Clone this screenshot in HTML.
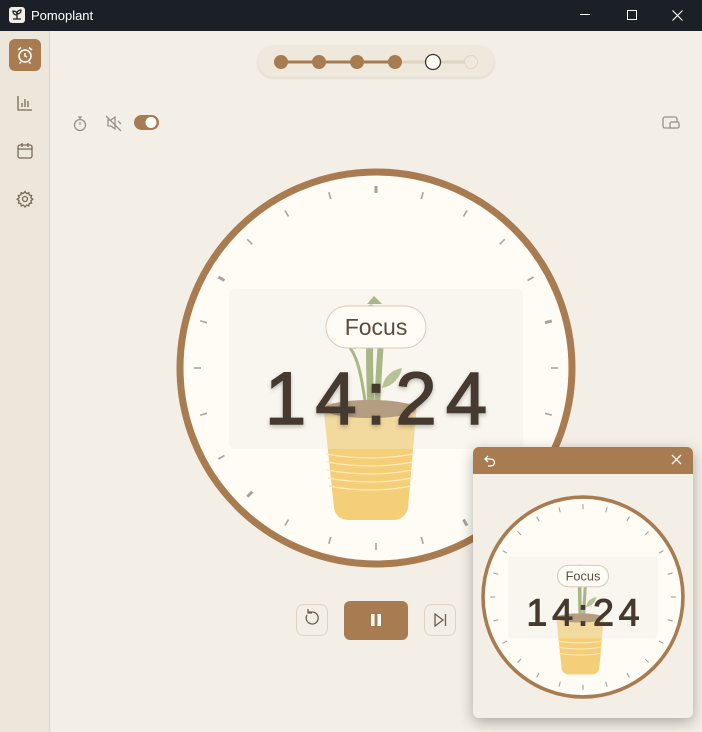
<!DOCTYPE html>
<html><head><meta charset="utf-8"><style>
*{margin:0;padding:0;box-sizing:border-box}
body{width:702px;height:732px;overflow:hidden;background:#f3efe6;font-family:"Liberation Sans",sans-serif;position:relative}
.title{position:absolute;left:0;top:0;width:702px;height:31px;background:#1b2026;color:#fff;font-size:13px}
.side{position:absolute;left:0;top:31px;width:50px;height:701px;background:#ede6da;border-right:1px solid #ddd3c3}
.abs{position:absolute}
</style></head><body>
<div class="title">
  <div class="abs" style="left:9px;top:7px;width:16px;height:16px;background:#f3efe6;border-radius:3px"></div>
  <svg class="abs" style="left:9px;top:7px" width="16" height="16" viewBox="0 0 16 16"><path d="M4 12h8M8 12V6M8 8C6 8 4 7 4 4c3 0 4 1 4 3M8 7c0-3 2-4 4-4 0 2-1 4-4 4" stroke="#1b2026" stroke-width="1.3" fill="none"/></svg>
  <div class="abs" style="left:31px;top:8px">Pomoplant</div>
  <div class="abs" style="left:580px;top:14px;width:10px;height:1px;background:#fff"></div>
  <div class="abs" style="left:627px;top:10px;width:10px;height:10px;border:1px solid #fff"></div>
  <svg class="abs" style="left:672px;top:10px" width="11" height="11"><path d="M0.5 0.5l10 10M10.5 0.5l-10 10" stroke="#fff" stroke-width="1.1"/></svg>
</div>
<div class="side">
  <div class="abs" style="left:9px;top:8px;width:32px;height:32px;background:#a87b50;border-radius:6px"></div>
  <svg class="abs" style="left:15px;top:14px" width="20" height="20" viewBox="0 0 20 20" fill="none" stroke="#fff" stroke-width="1.5"><circle cx="10" cy="11" r="6"/><path d="M10 8v3l2 1M3 5l3-2.5M17 5l-3-2.5M6 17l-1.5 1.5M14 17l1.5 1.5"/></svg>
  <svg class="abs" style="left:15px;top:62px" width="20" height="20" viewBox="0 0 20 20" fill="none" stroke="#7a6a58" stroke-width="1.3"><path d="M3 3v14h14M7 14v-4M10 14V6M13 14v-6"/></svg>
  <svg class="abs" style="left:15px;top:110px" width="20" height="20" viewBox="0 0 20 20" fill="none" stroke="#7a6a58" stroke-width="1.3"><rect x="3" y="4" width="14" height="13" rx="2"/><path d="M3 8h14M7 2v4M13 2v4"/></svg>
  <svg class="abs" style="left:15px;top:158px" width="20" height="20" viewBox="0 0 20 20" fill="none" stroke="#7a6a58" stroke-width="1.3"><circle cx="10" cy="10" r="2.5"/><path d="M10 2.5l1.5 2 2.3-.8.4 2.4 2.4.4-.8 2.3 2 1.5-2 1.5.8 2.3-2.4.4-.4 2.4-2.3-.8-1.5 2-1.5-2-2.3.8-.4-2.4-2.4-.4.8-2.3-2-1.5 2-1.5-.8-2.3 2.4-.4.4-2.4 2.3.8z"/></svg>
</div>

<div class="abs" style="left:258px;top:46px;width:236px;height:31px;border-radius:16px;background:#efe9dd;box-shadow:0 1px 3px rgba(0,0,0,.12)"></div>
<svg class="abs" style="left:0;top:0" width="702" height="732">
  <line x1="281" y1="62" x2="395" y2="62" stroke="#a87b50" stroke-width="3"/>
  <line x1="395" y1="62" x2="471" y2="62" stroke="#e0d4c0" stroke-width="3"/>
  <circle cx="281" cy="62" r="7" fill="#a87b50"/><circle cx="319" cy="62" r="7" fill="#a87b50"/>
  <circle cx="357" cy="62" r="7" fill="#a87b50"/><circle cx="395" cy="62" r="7" fill="#a87b50"/>
  <circle cx="433" cy="62" r="7.5" fill="#fefcf5" stroke="#3e3530" stroke-width="1.3"/>
  <circle cx="471" cy="62" r="6.5" fill="#efe8dc" stroke="#e0d6c6"/>
  <g fill="none" stroke="#9a9088" stroke-width="1.3">
    <circle cx="80" cy="125" r="5.5"/><path d="M78 117h4M80 120v-3M80 122v3"/>
    <path d="M108 120h3l4-3v12l-4-3h-3zM106 116l15 15M118 121l3 3"/>
    <rect x="663" y="117" width="14" height="11" rx="2"/><rect x="670" y="122" width="9" height="6" rx="1.5" fill="#f3efe6"/>
  </g>
  <rect x="134" y="115" width="25" height="15" rx="7.5" fill="#a87b50"/>
  <circle cx="151" cy="122.5" r="5.5" fill="#fff"/>

  <g transform="translate(376,368)">
    <circle r="196" fill="#fefcf5" stroke="#a87b50" stroke-width="7"/>
    <g stroke="#a8a39c" stroke-width="1.6">
      <line x1="0" y1="-182" x2="0" y2="-175" stroke-width="3"/>
      <line x1="0" y1="-182" x2="0" y2="-175" transform="rotate(15)"/>
      <line x1="0" y1="-182" x2="0" y2="-175" transform="rotate(30)"/>
      <line x1="0" y1="-182" x2="0" y2="-175" transform="rotate(45)"/>
      <line x1="0" y1="-182" x2="0" y2="-175" transform="rotate(60)"/>
      <line x1="0" y1="-182" x2="0" y2="-175" transform="rotate(75)" stroke-width="3"/>
      <line x1="0" y1="-182" x2="0" y2="-175" transform="rotate(90)"/>
      <line x1="0" y1="-182" x2="0" y2="-175" transform="rotate(105)"/>
      <line x1="0" y1="-182" x2="0" y2="-175" transform="rotate(120)"/>
      <line x1="0" y1="-182" x2="0" y2="-175" transform="rotate(135)"/>
      <line x1="0" y1="-182" x2="0" y2="-175" transform="rotate(150)" stroke-width="3"/>
      <line x1="0" y1="-182" x2="0" y2="-175" transform="rotate(165)"/>
      <line x1="0" y1="-182" x2="0" y2="-175" transform="rotate(180)"/>
      <line x1="0" y1="-182" x2="0" y2="-175" transform="rotate(195)"/>
      <line x1="0" y1="-182" x2="0" y2="-175" transform="rotate(210)"/>
      <line x1="0" y1="-182" x2="0" y2="-175" transform="rotate(225)" stroke-width="3"/>
      <line x1="0" y1="-182" x2="0" y2="-175" transform="rotate(240)"/>
      <line x1="0" y1="-182" x2="0" y2="-175" transform="rotate(255)"/>
      <line x1="0" y1="-182" x2="0" y2="-175" transform="rotate(270)"/>
      <line x1="0" y1="-182" x2="0" y2="-175" transform="rotate(285)"/>
      <line x1="0" y1="-182" x2="0" y2="-175" transform="rotate(300)" stroke-width="3"/>
      <line x1="0" y1="-182" x2="0" y2="-175" transform="rotate(315)"/>
      <line x1="0" y1="-182" x2="0" y2="-175" transform="rotate(330)"/>
      <line x1="0" y1="-182" x2="0" y2="-175" transform="rotate(345)"/>
    </g>
    <g fill="none" stroke="#849a55" stroke-width="7" stroke-linecap="round">
      <path d="M-5 40 C-7 0 -7 -30 -5 -60"/>
      <path d="M1 40 C3 0 5 -30 7 -55" stroke-width="6"/>
    </g>
    <path d="M-32 -20 c-8 -5 -10 -10 -2 -10 c10 0 14 6 14 11 z" fill="#9bae6c"/>
    <path d="M-26 -20 C-18 -10 -14 10 -10 40" stroke="#849a55" stroke-width="3" fill="none"/>
    <path d="M6 20 c2 -12 10 -18 20 -20 c-2 10 -9 18 -20 20z" fill="#9bae6c"/>
    <path d="M-9 -64 l7 -8 l8 8z" fill="#849a55"/>
    <path d="M-53 35 L41 35 L32 140 Q29 152 16 152 L-26 152 Q-40 152 -42 140 Z" fill="#f5cf78"/>
    <ellipse cx="-6" cy="41" rx="46" ry="9" fill="#96734c"/>
    <g stroke="#fbe9c0" stroke-width="1.2" fill="none">
      <path d="M-50 86 Q-6 94 38 86"/><path d="M-49 94 Q-6 102 37 94"/><path d="M-49 102 Q-6 110 37 102"/>
      <path d="M-48 110 Q-6 118 36 110"/><path d="M-47 118 Q-6 126 35 118"/>
    </g>
    <rect x="-147" y="-79" width="294" height="160" rx="6" fill="#efebe1" fill-opacity="0.35"/>
    <text x="0" y="56" text-anchor="middle" font-family="Liberation Sans" font-size="74" fill="#463a30" stroke="#463a30" stroke-width="1.6" textLength="222" lengthAdjust="spacing" style="filter:drop-shadow(0 2px 2px rgba(0,0,0,.25))">14:24</text>
    <rect x="-50" y="-62" width="100" height="42" rx="21" fill="#fefcf5" stroke="#d8ccb8"/>
    <text x="0" y="-33" text-anchor="middle" font-family="Liberation Sans" font-size="23" fill="#5a4c40">Focus</text>
  </g>

  <rect x="296.5" y="604.5" width="31" height="31" rx="7" fill="#f3efe6" stroke="#e0d3c0"/>
  <path d="M307 615 a6 6 0 1 0 5 -3 h-4 M308 609 v4 h4" fill="none" stroke="#6b5d50" stroke-width="1.3"/>
  <rect x="344" y="601" width="64" height="39" rx="6" fill="#a87b50"/>
  <rect x="371" y="614" width="3.5" height="12" fill="#fff"/><rect x="377.5" y="614" width="3.5" height="12" fill="#fff"/>
  <rect x="424.5" y="604.5" width="31" height="31" rx="7" fill="#f3efe6" stroke="#e0d3c0"/>
  <path d="M435 614v12l8-6z M445.5 614v12" fill="none" stroke="#6b5d50" stroke-width="1.3"/>
</svg>

<div class="abs" style="left:473px;top:447px;width:220px;height:271px;border-radius:6px;background:#f3efe6;box-shadow:0 4px 14px rgba(0,0,0,.3);overflow:hidden">
  <div style="height:27px;background:#a87b50"></div>
</div>
<svg class="abs" style="left:0;top:0" width="702" height="732">
  <path d="M488 456 l-3 3 l3 3 M485 459 h6 a3.5 3.5 0 0 1 0 7 h-3" fill="none" stroke="#fff" stroke-width="1.3"/>
  <path d="M672 455l9 9M681 455l-9 9" stroke="#fff" stroke-width="1.3"/>
  <g transform="translate(583,597) scale(0.51)">
    <circle r="196" fill="#fefcf5" stroke="#a87b50" stroke-width="7"/>
    <g stroke="#a8a39c" stroke-width="2.2">
      <line x1="0" y1="-182" x2="0" y2="-172"/>
      <line x1="0" y1="-182" x2="0" y2="-172" transform="rotate(15)"/>
      <line x1="0" y1="-182" x2="0" y2="-172" transform="rotate(30)"/>
      <line x1="0" y1="-182" x2="0" y2="-172" transform="rotate(45)"/>
      <line x1="0" y1="-182" x2="0" y2="-172" transform="rotate(60)"/>
      <line x1="0" y1="-182" x2="0" y2="-172" transform="rotate(75)"/>
      <line x1="0" y1="-182" x2="0" y2="-172" transform="rotate(90)"/>
      <line x1="0" y1="-182" x2="0" y2="-172" transform="rotate(105)"/>
      <line x1="0" y1="-182" x2="0" y2="-172" transform="rotate(120)"/>
      <line x1="0" y1="-182" x2="0" y2="-172" transform="rotate(135)"/>
      <line x1="0" y1="-182" x2="0" y2="-172" transform="rotate(150)"/>
      <line x1="0" y1="-182" x2="0" y2="-172" transform="rotate(165)"/>
      <line x1="0" y1="-182" x2="0" y2="-172" transform="rotate(180)"/>
      <line x1="0" y1="-182" x2="0" y2="-172" transform="rotate(195)"/>
      <line x1="0" y1="-182" x2="0" y2="-172" transform="rotate(210)"/>
      <line x1="0" y1="-182" x2="0" y2="-172" transform="rotate(225)"/>
      <line x1="0" y1="-182" x2="0" y2="-172" transform="rotate(240)"/>
      <line x1="0" y1="-182" x2="0" y2="-172" transform="rotate(255)"/>
      <line x1="0" y1="-182" x2="0" y2="-172" transform="rotate(270)"/>
      <line x1="0" y1="-182" x2="0" y2="-172" transform="rotate(285)"/>
      <line x1="0" y1="-182" x2="0" y2="-172" transform="rotate(300)"/>
      <line x1="0" y1="-182" x2="0" y2="-172" transform="rotate(315)"/>
      <line x1="0" y1="-182" x2="0" y2="-172" transform="rotate(330)"/>
      <line x1="0" y1="-182" x2="0" y2="-172" transform="rotate(345)"/>
    </g>
    <g fill="none" stroke="#849a55" stroke-width="7" stroke-linecap="round">
      <path d="M-5 40 C-7 0 -7 -30 -5 -60"/>
      <path d="M1 40 C3 0 5 -30 7 -55" stroke-width="6"/>
    </g>
    <path d="M-32 -20 c-8 -5 -10 -10 -2 -10 c10 0 14 6 14 11 z" fill="#9bae6c"/>
    <path d="M6 20 c2 -12 10 -18 20 -20 c-2 10 -9 18 -20 20z" fill="#9bae6c"/>
    <path d="M-53 35 L41 35 L32 140 Q29 152 16 152 L-26 152 Q-40 152 -42 140 Z" fill="#f5cf78"/>
    <ellipse cx="-6" cy="41" rx="46" ry="9" fill="#96734c"/>
    <g stroke="#fbe9c0" stroke-width="2" fill="none">
      <path d="M-50 86 Q-6 94 38 86"/><path d="M-49 98 Q-6 106 37 98"/><path d="M-48 110 Q-6 118 36 110"/>
    </g>
    <rect x="-147" y="-79" width="294" height="160" rx="8" fill="#efebe1" fill-opacity="0.35"/>
    <text x="0" y="56" text-anchor="middle" font-family="Liberation Sans" font-size="74" fill="#463a30" stroke="#463a30" stroke-width="2" textLength="222" lengthAdjust="spacing">14:24</text>
    <rect x="-50" y="-62" width="100" height="42" rx="21" fill="#fefcf5" stroke="#d8ccb8" stroke-width="2"/>
    <text x="0" y="-32" text-anchor="middle" font-family="Liberation Sans" font-size="25" fill="#5a4c40">Focus</text>
  </g>
</svg>
</body></html>
